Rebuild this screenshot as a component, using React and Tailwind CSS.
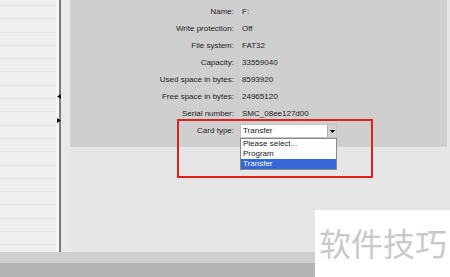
import React from 'react';

const rows = [
  ['Name:', 'F:'],
  ['Write protection:', 'Off'],
  ['File system:', 'FAT32'],
  ['Capacity:', '33559040'],
  ['Used space in bytes:', '8593920'],
  ['Free space in bytes:', '24965120'],
  ['Serial number:', 'SMC_08ee127d00'],
];

const options = ['Please select...', 'Program', 'Transfer'];

const App = () => {
  return (
    <div
      className="relative w-[450px] h-[277px] overflow-hidden bg-[#e6e6e6] flex flex-col text-[8px] text-[#222]"
      style={{ fontFamily: '"Liberation Sans", Arial, sans-serif' }}
    >
      <div className="flex h-[252px]">
        {/* tree panel */}
        <div className="w-[56px] bg-[#efefef] pt-[5px]">
          {Array.from({ length: 19 }).map((_, i) => (
            <div key={i} className="h-[13.3px] border-t border-[#e7e7e7]" />
          ))}
        </div>
        <div className="w-[3px] bg-[#f7f7f7]" />
        <div className="w-[2px] bg-[#7c7c7c]" />
        <div className="w-[9px] bg-[#e9e9e9]" />

        {/* properties */}
        <div className="flex-1 flex flex-col">
          <div className="h-[147px] mr-[3px] bg-[#cfcfcf] pt-[3px]">
            {rows.map(([label, value]) => (
              <div key={label} className="flex h-[17px] leading-[17px]">
                <div className="w-[164px] text-right">{label}</div>
                <div className="pl-[8px]">{value}</div>
              </div>
            ))}
            <div className="flex h-[17px] items-center">
              <div className="w-[164px] text-right">Card type:</div>
              <div className="relative ml-[6px] mt-[1px]">
                <div className="flex w-[97px] h-[14px] bg-white border border-[#c4c4c4]">
                  <span className="flex-1 pl-[2px] leading-[12px]">Transfer</span>
                  <span className="w-[9px] bg-[#d2d2d2] border-l border-[#b0b0b0] flex items-center justify-center">
                    <svg width="5" height="3" viewBox="0 0 5 3">
                      <path d="M0 0h5L2.5 3z" fill="#000" />
                    </svg>
                  </span>
                </div>
                <div className="absolute left-0 top-[14px] w-[97px] bg-white border border-[#8a8a8a] z-10">
                  {options.map((o) => (
                    <div
                      key={o}
                      className={`h-[10px] leading-[10px] pl-[2px] ${o === 'Transfer' ? 'bg-[#3468d6] text-white' : ''}`}
                    >
                      {o}
                    </div>
                  ))}
                </div>
              </div>
            </div>
          </div>
        </div>
      </div>
      <div className="h-[11px] bg-[#cfcfcf]" />
      <div className="flex-1 bg-[#b5b5b5]" />

      {/* tree expand markers */}
      <svg className="absolute left-[57px] top-[94px]" width="4" height="5" viewBox="0 0 4 5">
        <path d="M4 0v5L0 2.5z" fill="#111" />
      </svg>
      <svg className="absolute left-[57px] top-[118px]" width="4" height="5" viewBox="0 0 4 5">
        <path d="M0 0v5l4-2.5z" fill="#111" />
      </svg>

      {/* highlight annotation */}
      <div className="absolute left-[177px] top-[119px] w-[196px] h-[59px] border-2 border-[#e0201c]" />

      {/* watermark */}
      <div
        className="absolute left-[315px] top-[210px] w-[135px] h-[67px] bg-white flex items-center pl-[4px] pb-[4px] text-[32px] text-[#c9c9c9]"
        style={{ fontFamily: '"Noto Sans CJK SC", sans-serif' }}
      >
        软件技巧
      </div>
    </div>
  );
};

export default App;
